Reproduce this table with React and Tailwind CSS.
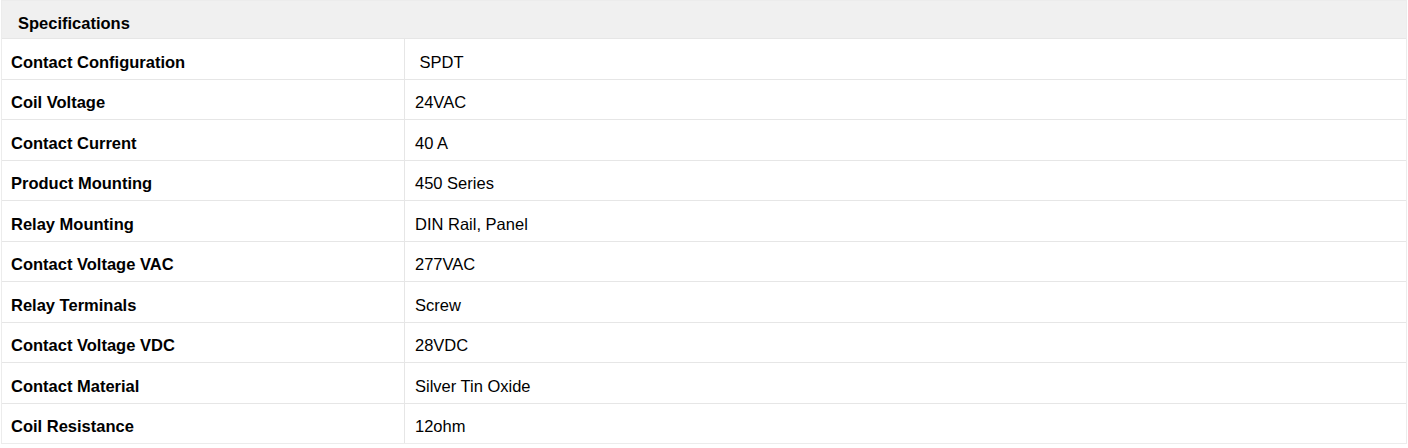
const specs = [
  ['Contact Configuration', '\u00a0SPDT'],
  ['Coil Voltage', '24VAC'],
  ['Contact Current', '40 A'],
  ['Product Mounting', '450 Series'],
  ['Relay Mounting', 'DIN Rail, Panel'],
  ['Contact Voltage VAC', '277VAC'],
  ['Relay Terminals', 'Screw'],
  ['Contact Voltage VDC', '28VDC'],
  ['Contact Material', 'Silver Tin Oxide'],
  ['Coil Resistance', '12ohm'],
]

export default function App() {
  return (
    <div className="w-[1408px] h-[448px] bg-white text-black font-['Liberation_Sans',Arial,sans-serif] text-[16.5px]">
      <div className="ml-[1px] w-[1406px] border border-[#ececec]">
        <div className="h-[37px] flex items-center pl-[16px] pt-[7px] bg-[#f0f0f0] font-bold">
          Specifications
        </div>
        {specs.map(([label, value]) => (
          <div key={label} className="flex h-[40.5px] border-t border-[#e6e6e6]">
            <div className="w-[403px] flex items-center pl-[9px] pt-[7px] font-bold border-r border-[#e6e6e6]">
              {label}
            </div>
            <div className="flex-1 flex items-center pl-[10px] pt-[7px]">{value}</div>
          </div>
        ))}
      </div>
    </div>
  )
}
